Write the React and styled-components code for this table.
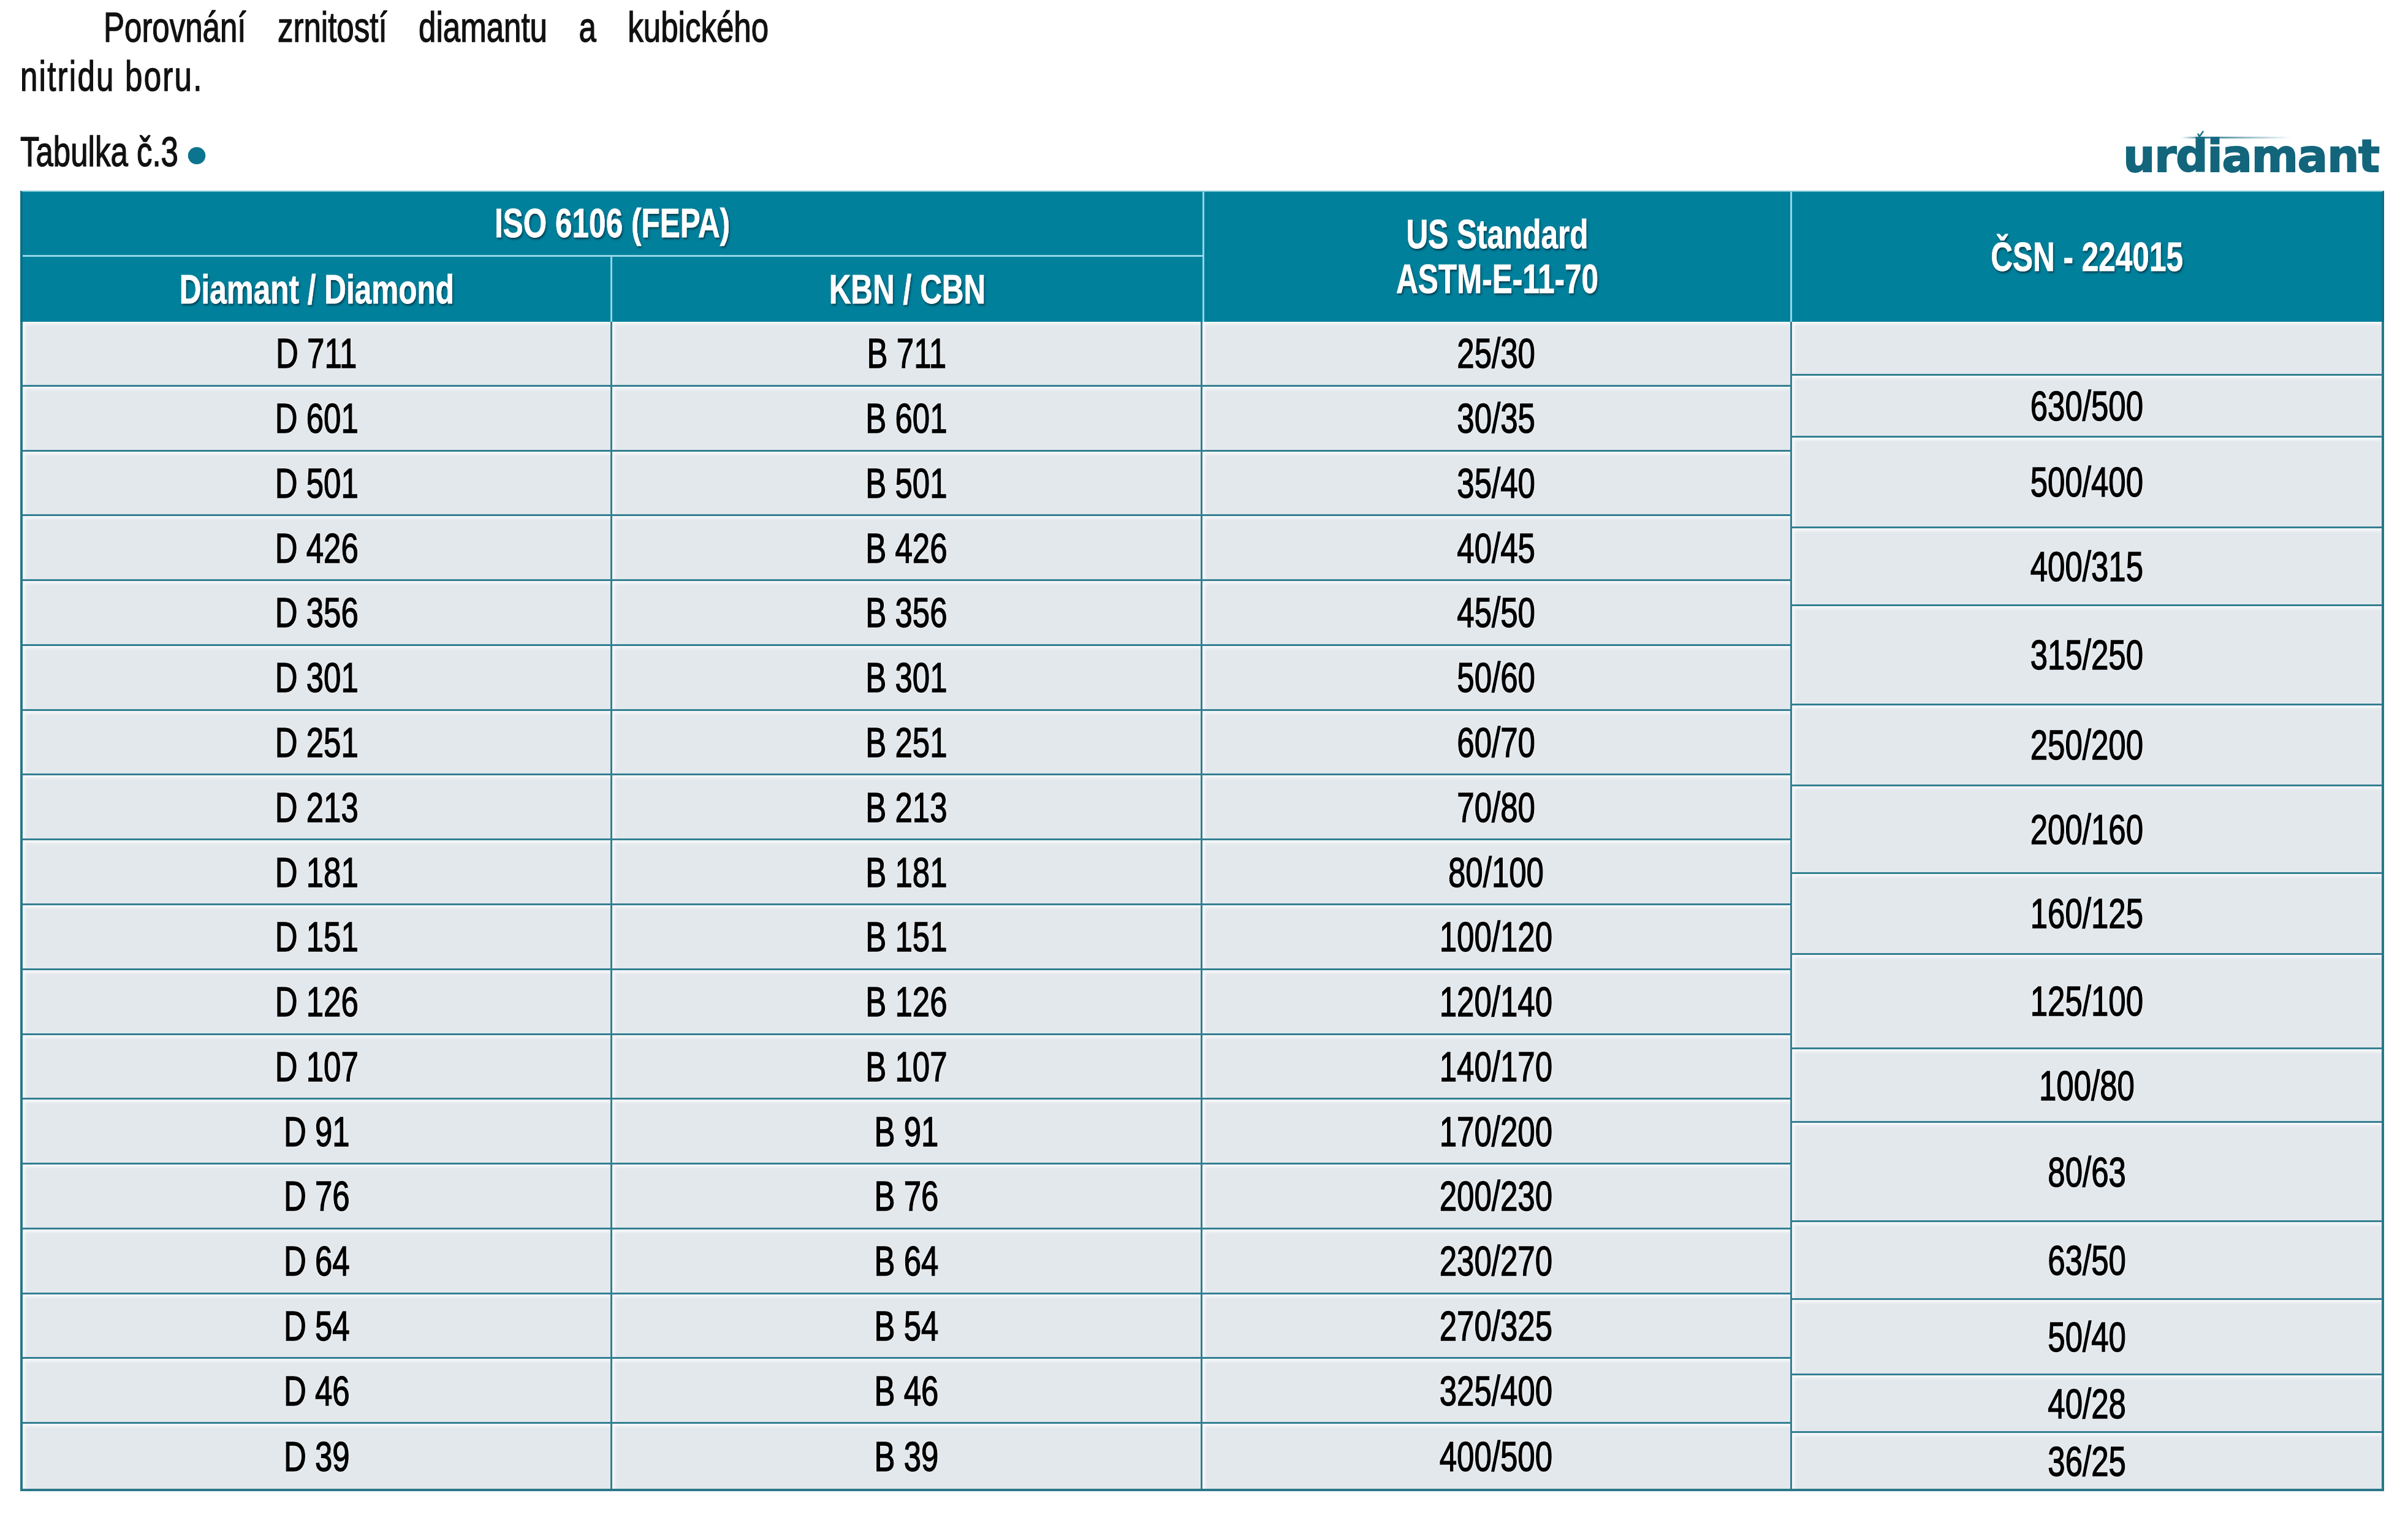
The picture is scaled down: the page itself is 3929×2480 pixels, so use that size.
import React from 'react';
import styled, { createGlobalStyle } from 'styled-components';

const GlobalStyle = createGlobalStyle`
  html, body {
    margin: 0;
    padding: 0;
    background: #ffffff;
  }
  body {
    font-family: "Liberation Sans", Arial, sans-serif;
    color: #111;
  }
`;

const leftRows = [
  ['D 711', 'B 711', '25/30'],
  ['D 601', 'B 601', '30/35'],
  ['D 501', 'B 501', '35/40'],
  ['D 426', 'B 426', '40/45'],
  ['D 356', 'B 356', '45/50'],
  ['D 301', 'B 301', '50/60'],
  ['D 251', 'B 251', '60/70'],
  ['D 213', 'B 213', '70/80'],
  ['D 181', 'B 181', '80/100'],
  ['D 151', 'B 151', '100/120'],
  ['D 126', 'B 126', '120/140'],
  ['D 107', 'B 107', '140/170'],
  ['D 91', 'B 91', '170/200'],
  ['D 76', 'B 76', '200/230'],
  ['D 64', 'B 64', '230/270'],
  ['D 54', 'B 54', '270/325'],
  ['D 46', 'B 46', '325/400'],
  ['D 39', 'B 39', '400/500'],
];

// CSN cells do not line up with the other rows, grow = relative height
const csnCells = [
  ['', 132],
  ['630/500', 152],
  ['500/400', 226],
  ['400/315', 192],
  ['315/250', 248],
  ['250/200', 200],
  ['200/160', 218],
  ['160/125', 200],
  ['125/100', 235],
  ['100/80', 183],
  ['80/63', 247],
  ['63/50', 192],
  ['50/40', 187],
  ['40/28', 142],
  ['36/25', 141],
];

const App = () => {
  return (
    <Page>
      <GlobalStyle />
      <Intro>
        <FirstLine>Porovnání zrnitostí diamantu a kubického</FirstLine>
        <Line>nitridu boru.</Line>
      </Intro>

      <CaptionRow>
        <Caption>
          Tabulka č.3<Dot />
        </Caption>
        <Logo>
          <Spark viewBox="0 0 200 20" aria-hidden="true">
            <defs>
              <linearGradient id="streak" x1="0" x2="1" y1="0" y2="0">
                <stop offset="0" stopColor="#1a6f86" stopOpacity="0" />
                <stop offset="0.2" stopColor="#1a6f86" stopOpacity="0.9" />
                <stop offset="1" stopColor="#1a6f86" stopOpacity="0" />
              </linearGradient>
            </defs>
            <rect x="0" y="11" width="180" height="3" fill="url(#streak)" />
            <path d="M24 19 L36 2 M27 6 L33 16" stroke="#1a6f86" strokeWidth="2.5" fill="none" />
          </Spark>
          <LogoText>urdiamant</LogoText>
        </Logo>
      </CaptionRow>

      <Table>
        <Header>
          <HeadCell $col="1 / 3" $row="1" $bottom><Narrow>ISO 6106 (FEPA)</Narrow></HeadCell>
          <HeadCell $col="1" $row="2" $right><Narrow>Diamant / Diamond</Narrow></HeadCell>
          <HeadCell $col="2" $row="2"><Narrow>KBN / CBN</Narrow></HeadCell>
          <HeadCell $col="3" $row="1 / 3" $left $right>
            <Narrow>
              US Standard
              <br />
              ASTM-E-11-70
            </Narrow>
          </HeadCell>
          <HeadCell $col="4" $row="1 / 3"><Narrow>ČSN - 224015</Narrow></HeadCell>
        </Header>

        <Body>
          <LeftGrid>
            {leftRows.map((row, rowIndex) =>
              row.map((value, colIndex) => (
                <Cell
                  key={`${rowIndex}-${colIndex}`}
                  $last={rowIndex === leftRows.length - 1}
                >
                  <Narrow>{value}</Narrow>
                </Cell>
              ))
            )}
          </LeftGrid>
          <CsnColumn>
            {csnCells.map(([value, grow], i) => (
              <CsnCell key={i} $grow={grow} $last={i === csnCells.length - 1}>
                <Narrow>{value}</Narrow>
              </CsnCell>
            ))}
          </CsnColumn>
        </Body>
      </Table>
    </Page>
  );
};

// the print uses a condensed grotesque; Arial metrics squeezed horizontally
const SQUEEZE = 0.75;

const Page = styled.div`
  padding: 4px 0 40px 33px;
  width: 3857px;
`;

const Narrow = styled.span`
  display: inline-block;
  transform: scaleX(${SQUEEZE});
  white-space: nowrap;
`;

const Intro = styled.div`
  font-size: 68px;
  line-height: 80px;
  -webkit-text-stroke: 1.4px #111;
`;

const FirstLine = styled.div`
  width: ${1085 / SQUEEZE}px;
  margin-left: 136px;
  transform: scaleX(${SQUEEZE});
  transform-origin: left center;
  text-align: justify;
  text-align-last: justify;
  white-space: nowrap;
`;

const Line = styled.div`
  transform: scaleX(${SQUEEZE});
  transform-origin: left center;
  letter-spacing: 3px;
`;

const CaptionRow = styled.div`
  display: flex;
  justify-content: space-between;
  align-items: flex-end;
  margin-top: 43px;
  height: 80px;
`;

const Caption = styled.div`
  font-size: 68px;
  line-height: 80px;
  -webkit-text-stroke: 1.4px #111;
  transform: scaleX(${SQUEEZE});
  transform-origin: left center;
`;

// drawn inside the squeezed caption, so it is widened to stay round
const Dot = styled.span`
  display: inline-block;
  width: ${28 / SQUEEZE}px;
  height: 28px;
  margin-left: ${16 / SQUEEZE}px;
  border-radius: 50%;
  background: #0b7590;
  -webkit-text-stroke: 0;
  vertical-align: 3px;
`;

const Logo = styled.div`
  position: relative;
  margin-right: 8px;
  margin-bottom: -4px;
`;

const LogoText = styled.span`
  display: block;
  font-family: "DejaVu Sans", "Liberation Sans", sans-serif;
  font-weight: bold;
  font-size: 73px;
  line-height: 73px;
  letter-spacing: -1px;
  color: #13657c;
  -webkit-text-stroke: 2px #13657c;
`;

const Spark = styled.svg`
  position: absolute;
  left: 95px;
  top: -6px;
  width: 200px;
  height: 20px;
`;

const Table = styled.div`
  margin-top: 24px;
  display: flex;
  flex-direction: column;
`;

const Header = styled.div`
  display: grid;
  grid-template-columns: repeat(4, 1fr);
  grid-template-rows: 106px 106px;
  background: #01809c;
  border-top: 2px solid #7fc9d9;
  border-left: 4px solid #0c6f87;
  border-right: 4px solid #0c6f87;
`;

const HeadCell = styled.div`
  grid-column: ${(p) => p.$col};
  grid-row: ${(p) => p.$row};
  display: flex;
  align-items: center;
  justify-content: center;
  text-align: center;
  color: #ffffff;
  font-weight: bold;
  font-size: 66px;
  line-height: 73px;
  -webkit-text-stroke: 0.8px #ffffff;
  text-shadow: 2px 3px 4px rgba(0, 35, 50, 0.75);
  border-bottom: ${(p) => (p.$bottom ? '3px solid #8fd6e6' : 'none')};
  border-left: ${(p) => (p.$left ? '3px solid #8fd6e6' : 'none')};
  border-right: ${(p) => (p.$right ? '3px solid #8fd6e6' : 'none')};
`;

const Body = styled.div`
  display: grid;
  grid-template-columns: 3fr 1fr;
  height: 1908px;
  box-sizing: border-box;
  border: 4px solid #2a7789;
  border-top: none;
  background: #e3e8ec;
`;

const LeftGrid = styled.div`
  display: grid;
  grid-template-columns: repeat(3, 1fr);
  grid-template-rows: repeat(18, 1fr);
`;

const Cell = styled.div`
  display: flex;
  align-items: center;
  justify-content: center;
  font-size: 68px;
  color: #000;
  -webkit-text-stroke: 1.4px #000;
  text-shadow: 0 0 4px #ffffff, 0 0 2px #ffffff;
  border-right: 3px solid #337f92;
  border-bottom: ${(p) => (p.$last ? 'none' : '3px solid #337f92')};
  box-shadow: inset 4px 4px 5px rgba(255, 255, 255, 0.75);
`;

const CsnColumn = styled.div`
  display: flex;
  flex-direction: column;
`;

const CsnCell = styled.div`
  flex: ${(p) => p.$grow} 1 0;
  display: flex;
  align-items: center;
  justify-content: center;
  font-size: 68px;
  color: #000;
  -webkit-text-stroke: 1.4px #000;
  text-shadow: 0 0 4px #ffffff, 0 0 2px #ffffff;
  border-bottom: ${(p) => (p.$last ? 'none' : '3px solid #337f92')};
  box-shadow: inset 4px 4px 5px rgba(255, 255, 255, 0.75);
`;

export default App;
